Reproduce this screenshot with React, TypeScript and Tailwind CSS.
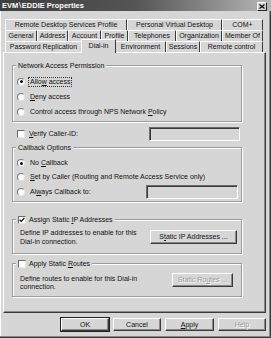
import React from "react";

const BG = "bg-[#d6d6d6]";

function Radio({ checked }: { checked?: boolean }) {
  return (
    <span className="flex items-center justify-center w-[8px] h-[8px] rounded-full bg-white border border-[#7a7a7a] border-r-[#e6e6e6] border-b-[#e6e6e6] shrink-0">
      {checked && <span className="block w-[3px] h-[3px] rounded-full bg-[#111]" />}
    </span>
  );
}

function Check({ checked }: { checked?: boolean }) {
  return (
    <span className="flex items-center justify-center w-[8px] h-[8px] bg-white border border-[#6a6a6a] border-r-[#e6e6e6] border-b-[#e6e6e6] shrink-0">
      {checked && (
        <svg width="6" height="6" viewBox="0 0 6 6">
          <path d="M0.6 2.8 L2.2 4.4 L5.4 1" stroke="#111" strokeWidth="1.3" fill="none" />
        </svg>
      )}
    </span>
  );
}

function Btn({
  children,
  w,
  disabled,
  def,
}: {
  children: React.ReactNode;
  w: string;
  disabled?: boolean;
  def?: boolean;
}) {
  return (
    <div
      className={`${w} h-[13px] flex items-center justify-center ${BG} border border-t-white border-l-white border-r-[#3a3a3a] border-b-[#3a3a3a] shadow-[inset_-1px_-1px_0_#8a8a8a] ${
        def ? "outline outline-1 outline-[#222]" : ""
      } ${disabled ? "text-[#9a9a9a] [text-shadow:1px_1px_0_#fff]" : "text-[#111]"}`}
    >
      {children}
    </div>
  );
}

function Group({
  legend,
  h,
  mt,
  children,
}: {
  legend: React.ReactNode;
  h: string;
  mt: string;
  children: React.ReactNode;
}) {
  return (
    <div
      className={`relative ${mt} ${h} ml-[8px] w-[230px] border border-[#9c9c9c] shadow-[1px_1px_0_#fff,inset_1px_1px_0_#fff]`}
    >
      <div className={`absolute left-[3px] top-[-5px] h-[9px] px-[2px] flex items-center gap-[3px] ${BG}`}>
        {legend}
      </div>
      {children}
    </div>
  );
}

function TextBox({ w }: { w: string }) {
  return (
    <div
      className={`${w} h-[14px] ${BG} border border-[#6a6a6a] border-r-white border-b-white shadow-[inset_1px_1px_0_#3a3a3a]`}
    />
  );
}

type Tab = { label: string; w: string; sel?: boolean };

function TabRow({ tabs }: { tabs: Tab[] }) {
  return (
    <div className="flex h-[11px] ml-[2px] items-end">
      {tabs.map((t) =>
        t.sel ? (
          <div
            key={t.label}
            className={`relative z-10 ${t.w} h-[14px] -mb-[1px] mx-[-1px] flex items-center justify-center ${BG} border-t border-l border-r border-t-white border-l-white border-r-[#3a3a3a] rounded-t-[1px] pb-[1px]`}
          >
            {t.label}
          </div>
        ) : (
          <div
            key={t.label}
            className={`${t.w} h-[11px] flex items-center justify-center whitespace-nowrap border-t border-l border-r border-t-white border-l-white border-r-[#3a3a3a] rounded-t-[1px]`}
          >
            {t.label}
          </div>
        )
      )}
    </div>
  );
}

export default function App() {
  return (
    <div
      className={`w-[271px] h-[338px] ${BG} text-[7px] leading-[8px] text-[#111] font-['Liberation_Sans',Arial,sans-serif] overflow-hidden flex flex-col shadow-[inset_-1px_-1px_0_#3a3a3a,inset_-2px_-2px_0_#8a8a8a,inset_1px_0_0_#fff]`}
    >
      {/* Title bar */}
      <div className="h-[11px] flex items-center justify-between pl-[2px] pr-[4px] bg-gradient-to-r from-[#3e3e3e] via-[#555] to-[#b8b8b8]">
        <span className="text-white font-bold text-[7.5px] leading-[9px] flex items-center">
          <span>EVM</span>
          <span className="mx-[0.5px] font-['DejaVu_Sans',sans-serif] text-[7px]">{"\\"}</span>
          <span>EDDIE Properties</span>
        </span>
        <div
          className={`w-[10px] h-[9px] flex items-center justify-center ${BG} border border-t-white border-l-white border-r-[#222] border-b-[#222] mt-[2px]`}
        >
          <svg width="6" height="5" viewBox="0 0 6 5">
            <path d="M0.5 0.5 L5.5 4.5 M5.5 0.5 L0.5 4.5" stroke="#111" strokeWidth="1.3" />
          </svg>
        </div>
      </div>

      {/* Tabs */}
      <div className="mt-[8px] pl-[3px]">
        <TabRow
          tabs={[
            { label: "Remote Desktop Services Profile", w: "w-[122px]" },
            { label: "Personal Virtual Desktop", w: "w-[95px]" },
            { label: "COM+", w: "w-[41px]" },
          ]}
        />
        <TabRow
          tabs={[
            { label: "General", w: "w-[32px]" },
            { label: "Address", w: "w-[31px]" },
            { label: "Account", w: "w-[33px]" },
            { label: "Profile", w: "w-[27px]" },
            { label: "Telephones", w: "w-[48px]" },
            { label: "Organization", w: "w-[46px]" },
            { label: "Member Of", w: "w-[41px]" },
          ]}
        />
        <TabRow
          tabs={[
            { label: "Password Replication", w: "w-[77px]" },
            { label: "Dial-in", w: "w-[35px]", sel: true },
            { label: "Environment", w: "w-[51px]" },
            { label: "Sessions", w: "w-[34px]" },
            { label: "Remote control", w: "w-[63px]" },
          ]}
        />

        {/* Panel */}
        <div className="w-[263px] h-[261px] border border-t-white border-l-white border-r-[#3a3a3a] border-b-[#3a3a3a] shadow-[inset_-1px_-1px_0_#8a8a8a] flex flex-col">
          <Group mt="mt-[12px]" h="h-[57px]" legend={<span>Network Access Permission</span>}>
            <div className="pt-[8px] pl-[4px] flex flex-col">
              <div className="h-[15px] flex items-center gap-[4px]">
                <Radio checked />
                <span className="outline outline-1 outline-dotted outline-[#333] px-[1px]">
                  Allo<u>w</u> access
                </span>
              </div>
              <div className="h-[15px] flex items-center gap-[4px]">
                <Radio />
                <span className="px-[1px]">
                  <u>D</u>eny access
                </span>
              </div>
              <div className="h-[15px] flex items-center gap-[4px]">
                <Radio />
                <span className="px-[1px]">
                  Control access through NPS Network <u>P</u>olicy
                </span>
              </div>
            </div>
          </Group>

          <div className="mt-[5px] h-[14px] flex items-center ml-[13px] mr-[25px] justify-between">
            <div className="flex items-center gap-[4px]">
              <Check />
              <span>
                <u>V</u>erify Caller-ID:
              </span>
            </div>
            <TextBox w="w-[91px]" />
          </div>

          <Group mt="mt-[6px]" h="h-[55px]" legend={<span>Callback Options</span>}>
            <div className="pt-[8px] pl-[4px] pr-[3px] flex flex-col">
              <div className="h-[14px] flex items-center gap-[4px]">
                <Radio checked />
                <span className="px-[1px]">
                  No <u>C</u>allback
                </span>
              </div>
              <div className="h-[13px] flex items-center gap-[4px]">
                <Radio />
                <span className="px-[1px]">
                  <u>S</u>et by Caller (Routing and Remote Access Service only)
                </span>
              </div>
              <div className="mt-[2px] h-[14px] flex items-center justify-between">
                <div className="flex items-center gap-[4px]">
                  <Radio />
                  <span className="px-[1px]">
                    Al<u>w</u>ays Callback to:
                  </span>
                </div>
                <TextBox w="w-[92px]" />
              </div>
            </div>
          </Group>

          <Group
            mt="mt-[17px]"
            h="h-[35px]"
            legend={
              <>
                <Check checked />
                <span>
                  Assign Static <u>I</u>P Addresses
                </span>
              </>
            }
          >
            <div className="h-full flex items-center justify-between pl-[7px] pr-[4px] pt-[1px]">
              <div className="leading-[9px]">
                Define IP addresses to enable for this
                <br />
                Dial-in connection.
              </div>
              <Btn w="w-[87px] h-[14px]">
                S<u>t</u>atic IP Addresses ...
              </Btn>
            </div>
          </Group>

          <Group
            mt="mt-[9px]"
            h="h-[34px]"
            legend={
              <>
                <Check />
                <span>
                  Apply Static <u>R</u>outes
                </span>
              </>
            }
          >
            <div className="h-full flex items-center justify-between pl-[7px] pr-[8px]">
              <div className="leading-[8px] pt-[6px]">
                Define routes to enable for this Dial-in
                <br />
                connection.
              </div>
              <Btn w="w-[61px] h-[14px]" disabled>
                Static Ro<u>u</u>tes ...
              </Btn>
            </div>
          </Group>
        </div>

        {/* Bottom buttons */}
        <div className="mt-[5px] w-[263px] flex justify-end gap-[4px]">
          <Btn w="w-[48px]" def>
            OK
          </Btn>
          <Btn w="w-[48px]">Cancel</Btn>
          <Btn w="w-[49px]">
            <u>A</u>pply
          </Btn>
          <Btn w="w-[48px]" disabled>
            Help
          </Btn>
        </div>
      </div>
    </div>
  );
}
